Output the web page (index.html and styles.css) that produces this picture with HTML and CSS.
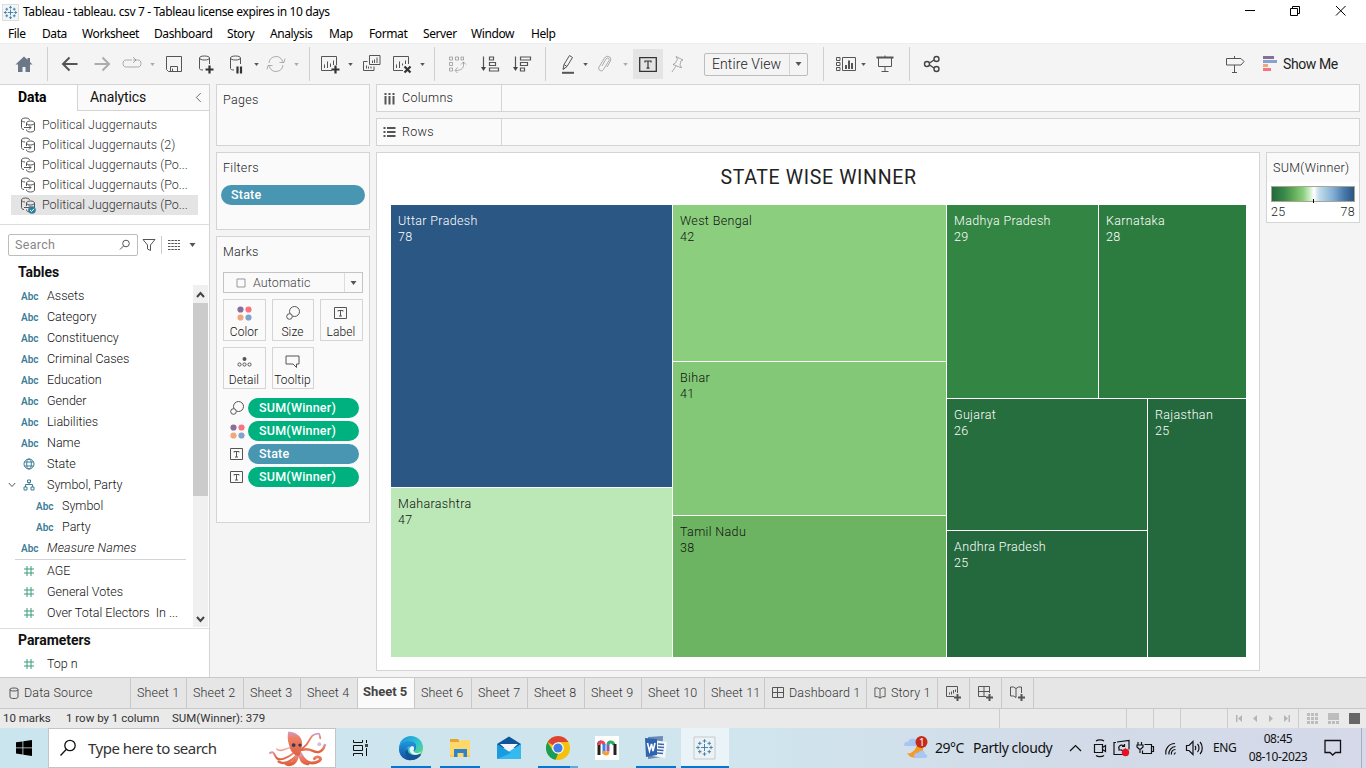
FILE: index.html
```html
<!DOCTYPE html>
<html lang="en">
<head>
<meta charset="utf-8">
<title>Tableau - tableau. csv 7</title>
<link rel="stylesheet" href="styles.css">
</head>
<body>
<svg class="defs" aria-hidden="true">
  <defs>
    <linearGradient id="edgeA" x1="0" y1="0" x2="1" y2="1"><stop offset="0" stop-color="#1a8fd6"/><stop offset=".5" stop-color="#2fc3d6"/><stop offset="1" stop-color="#6be05a"/></linearGradient>
    <linearGradient id="edgeB" x1="0" y1="0" x2="0" y2="1"><stop offset="0" stop-color="#2298e0"/><stop offset="1" stop-color="#0f4f9e"/></linearGradient>
    <linearGradient id="octo" x1="0" y1="0" x2="0" y2="1"><stop offset="0" stop-color="#c9a0cf"/><stop offset=".25" stop-color="#ee8068"/><stop offset="1" stop-color="#e0603f"/></linearGradient>
  </defs>
  <symbol id="logo" viewBox="0 0 16 16"><path d="M8 5v6M5 8h6M8 1v3M6.5 2.500h3M8 12v3M6.500 13.500h3M1 8h3M2.500 6.500v3M12 8h3M13.500 6.500v3M4 3v3M2.500 4.500h3M12 3v3M10.500 4.500h3M4 10v3M2.500 11.500h3M12 10v3M10.500 11.500h3"/></symbol>
  <symbol id="caret" viewBox="0 0 6 4"><path d="M0 0h6L3 4z"/></symbol>
  <symbol id="text" viewBox="0 0 18 15"><path d="M.7.7h16.600v13.600H.7z" stroke-width="1.300"/><path d="M6 5.500V4h6v1.500M9 4v7.200M7.500 11.200h3" stroke-width="1.200"/></symbol>
  <symbol id="stext" viewBox="0 0 14 12"><path d="M.5.5h12v11H.5z"/><path d="M4 4.500V3.500h5v1M6.500 3.500v5.500M5 9h3"/></symbol>
  <symbol id="size" viewBox="0 0 14 14"><circle cx="8.500" cy="5.500" r="5"/><circle cx="3.500" cy="10.500" r="2.800" class="knock"/></symbol>
  <symbol id="dots" viewBox="0 0 15 15"><circle cx="3.500" cy="3.500" r="3.100" fill="#886f97"/><circle cx="11.500" cy="3.500" r="3.100" fill="#f8727f"/><circle cx="3.500" cy="11.500" r="3.100" fill="#f1a77c"/><circle cx="11.500" cy="11.500" r="3.100" fill="#7fa3cc"/></symbol>
  <symbol id="ds" viewBox="0 0 16 16"><path d="M4 12.500C2.300 12.300 1.500 11.600 1.500 10.500V3C1.500 1.800 3.200 1 5.500 1S9.500 1.800 9.500 3M1.500 3C1.500 4.200 3 5 5 5M6.500 9V6C6.500 4.800 8.200 4 10.500 4s4 .8 4 2v7c0 1.200-1.700 2-4 2s-4-.8-4-2v-.5M6.500 6c0 1.200 1.700 2 4 2s4-.8 4-2M4 10.500h7M9 8.500l2 2-2 2"/></symbol>
  <symbol id="globe" viewBox="0 0 12 12"><circle cx="6" cy="6" r="5"/><ellipse cx="6" cy="6" rx="2.300" ry="5"/><path d="M1.500 4h9M1.500 8h9"/></symbol>
  <symbol id="hash" viewBox="0 0 12 12"><path d="M4 1v10M8 1v10M1 4h10M1 8h10"/></symbol>
  <symbol id="grid4" viewBox="0 0 12 12"><path d="M.5.5h11v10H.5zM5.500.5v10M.5 5.500h11"/></symbol>
  <symbol id="book" viewBox="0 0 12 13"><path d="M6 2.500L3.500 1H.5v9.500h3L6 12l2.500-1.500h3V1h-3L6 2.500zV12"/></symbol>
</svg>
<header class="titlebar">
  <svg class="ico app-logo"><use href="#logo"/></svg>
  <span class="title">Tableau - tableau. csv 7 - Tableau license expires in 10 days</span>
  <svg class="window-buttons" viewBox="0 0 110 20"><path d="M6 8.500h10M51.500 6.500h7v7h-7zM53.500 6V4.500h7v7H59M97 4l9.500 9.500M106.500 4L97 13.500"/></svg>
</header>
<nav class="menu"><span>File</span><span>Data</span><span>Worksheet</span><span>Dashboard</span><span>Story</span><span>Analysis</span><span>Map</span><span>Format</span><span>Server</span><span>Window</span><span>Help</span></nav>
<div class="toolbar">
  <i><svg class="i20 solid" viewBox="0 0 20 20"><path fill="#6b7887" d="M10 2.500L1.500 10.500H4V18h4.500v-5h3v5H16v-7.500h2.500L16 8V4h-2.500v1.800z"/></svg></i>
  <i class="sep first"></i>
  <i><svg class="i20 strong" viewBox="0 0 20 20"><path d="M17.500 10H3M9.500 3.500L3 10l6.500 6.500"/></svg></i>
  <i><svg class="i20 strong off" viewBox="0 0 20 20"><path d="M2.500 10H17M10.500 3.500L17 10l-6.500 6.500"/></svg></i>
  <i><svg class="i20 off" viewBox="0 0 20 20"><path d="M10 6H4C2 6 1 7.500 1 9.500S2 13 4 13h12c2 0 3-1.500 3-3.500S18 6 16 6h-5M11 3l3 3-3 3"/></svg></i>
  <i><svg class="caret off"><use href="#caret"/></svg></i>
  <i><svg class="i20" viewBox="0 0 20 20"><path d="M2.500 2.500h15v15h-13l-2-2zM6.500 17.500v-5h7v5M8.500 17v-2.500"/></svg></i>
  <i><svg class="i20" viewBox="0 0 20 20"><path d="M3.500 14.500V4C3.500 2.800 5.300 2 8.500 2s5 .8 5 2v6M3.500 4c0 1.200 2 2 5 2s5-.8 5-2M3.500 14.500c0 1 1.500 1.500 3.500 1.500"/><path class="heavy" d="M13.500 11.500v8M9.500 15.500h8"/></svg></i>
  <i><svg class="i20" viewBox="0 0 20 20"><path d="M4.500 14.500V4C4.500 2.800 6.300 2 9.500 2s5 .8 5 2v6M4.500 4c0 1.200 2 2 5 2s5-.8 5-2M4.500 14.500c0 1 1.500 1.500 3.500 1.500"/><path class="heavy" d="M11.500 12.500v7M15 12.500v7"/></svg></i>
  <i><svg class="caret"><use href="#caret"/></svg></i>
  <i><svg class="i20 off" viewBox="0 0 20 20"><path d="M3 9a7 7 0 0 1 13-3l1 2M17 11a7 7 0 0 1-13 3l-1-2M13.500 8.500h4.500l1-4M6.500 11.500H2l-1 4"/></svg></i>
  <i><svg class="caret off"><use href="#caret"/></svg></i>
  <i class="sep"></i>
  <i><svg class="i20" viewBox="0 0 20 20"><path d="M12 16.500H1.500v-14h15V11M4.500 14v-3.500M7.500 14V7.500M10.500 13V9.500M13.500 11V6.500"/><path class="heavy" d="M15.500 11.500v8M11.500 15.500h8"/></svg></i>
  <i><svg class="caret"><use href="#caret"/></svg></i>
  <i><svg class="i20" viewBox="0 0 20 20"><path d="M7.500 1.500h10.500v9H7.500zM5.500 7.500h-4v9h10.500v-4M10.500 9V6.500M12.500 9V5.500M15 9V3.500M4.500 14.500v-3M6.500 14.500v-2M9 14.500v-2"/></svg></i>
  <i><svg class="i20" viewBox="0 0 20 20"><path d="M11 16.500H1.500v-14h15V10M4.500 14v-3.500M7.500 14V7.500M10.500 11.500V9.500M13.500 10V6.500"/><path class="heavy" d="M12.500 12.500l6 6M18.500 12.500l-6 6"/></svg></i>
  <i><svg class="caret"><use href="#caret"/></svg></i>
  <i class="sep"></i>
  <i><svg class="i20 off" viewBox="0 0 20 20"><path d="M2.500 3h3v3h-3zM8.500 3h3v3h-3zM14 3h2.500v3H14zM2.500 8.500h3v3h-3zM2.500 14h3v3h-3zM16.500 8v3c0 3.500-2.500 5.500-8 5.500M14 10.500L16.500 8l2.500 2.500M10.500 13.500l-2.500 3 2.500 2.500"/></svg></i>
  <i><svg class="i20" viewBox="0 0 20 20"><path d="M3.500 2.500V15M9.500 3h4v3h-4zM9.500 8.500h6v3h-6zM9.500 14h9v3h-9z" stroke-width="1.200"/><path class="fill" d="M1 13h5l-2.500 4z"/></svg></i>
  <i><svg class="i20" viewBox="0 0 20 20"><path d="M3.500 2.500V15M8.500 3h10v3h-10zM8.500 8.500h7v3h-7zM8.500 14h4v3h-4z" stroke-width="1.200"/><path class="fill" d="M1 13h5l-2.500 4z"/></svg></i>
  <i class="sep"></i>
  <i><svg class="i20" viewBox="0 0 20 20"><path d="M5 15.500l1-5 5.500-9 3 2-5.500 9-4 3zM6 10.500l3 2M7 14l-1.500 1"/><path class="under" d="M4 18.800h12"/></svg></i>
  <i><svg class="caret"><use href="#caret"/></svg></i>
  <i><svg class="i20 off" viewBox="0 0 20 20"><path d="M7 12l4-7c1.500-2 4-.5 3 1.500l-5.500 9c-2 3-6 .5-4.500-2.500l5.500-9C11.500 1 17 2 15.500 7L12 13"/></svg></i>
  <i><svg class="caret off"><use href="#caret"/></svg></i>
  <i class="end"><b class="pressed"><svg class="textico"><use href="#text"/></svg></b></i>
  <i><svg class="i20 off" viewBox="0 0 20 20"><path d="M9 2.500l7 3.500-2 .8-1 4 1.500 3L6 10.500l2.500-1.500L10.500 5zM9 12l-4 6"/></svg></i>
  <i class="end"><span class="viewsel"><span>Entire View</span><b><svg class="caret big"><use href="#caret"/></svg></b></span></i>
  <i class="sep"></i>
  <i><svg class="fitico" viewBox="0 0 22 18"><path d="M7.500 2.500h13v13h-13zM1.500 2.500h3.500v3H1.500zM1.500 7.500h3.500v3H1.500zM1.500 12.500h3.500v3H1.500z"/><path d="M11 14v-4M14 14V5.500M17 14V8" stroke-width="2"/></svg></i>
  <i><svg class="caret"><use href="#caret"/></svg></i>
  <i><svg class="i20" viewBox="0 0 20 20"><path d="M3.500 4v8.500h13V4M10 12.500V17M6.500 17.500h7M10 1.500V3"/><path d="M1.500 3.500h17" stroke-width="2"/></svg></i>
  <i class="sep"></i>
  <i><svg class="i20 strong2" viewBox="0 0 20 20"><circle cx="5" cy="10" r="2.500"/><circle cx="14.500" cy="5" r="2.500"/><circle cx="14.500" cy="15" r="2.500"/><path d="M7.500 9L12 6M7.500 11l4.500 3"/></svg></i>
  <i></i>
  <i><svg class="i20" viewBox="0 0 20 20"><path d="M1.500 4.500h14.500l3 3-3 3.500H1.500zM9.500 2v2M9.500 11v7M7 18.500h5"/></svg></i>
  <span class="showme"><svg class="bars" viewBox="0 0 14 15"><path fill="#886f97" d="M0 0h11v3H0z"/><path fill="#84a3cf" d="M0 4h14v3H0z"/><path fill="#f1a77c" d="M0 8h5v3H0z"/><path fill="#f8727f" d="M0 12h8v3H0z"/></svg>Show Me</span>
</div>
<main class="work">
  <aside class="side">
    <div class="sidetabs"><b>Data</b><span>Analytics<svg viewBox="0 0 8 12"><path d="M6.500 1L1.500 6l5 5"/></svg></span></div>
    <ul class="sources">
      <li><svg class="ds"><use href="#ds"/></svg>Political Juggernauts</li>
      <li><svg class="ds"><use href="#ds"/></svg>Political Juggernauts (2)</li>
      <li><svg class="ds"><use href="#ds"/></svg>Political Juggernauts (Po...</li>
      <li><svg class="ds"><use href="#ds"/></svg>Political Juggernauts (Po...</li>
      <li class="on"><svg class="ds"><use href="#ds"/></svg><svg class="tick" viewBox="0 0 8 8"><circle cx="4" cy="4" r="3.800" fill="#2f7fa0" stroke="none"/><path d="M2 4l1.500 1.500L6 2.800" stroke="#fff"/></svg>Political Juggernauts (Po...</li>
    </ul>
    <div class="find">
      <span class="searchbox">Search<svg viewBox="0 0 12 12"><circle cx="7" cy="4.500" r="3.300"/><path d="M4.500 7L1 10.500"/></svg></span>
      <svg class="funnel" viewBox="0 0 14 14"><path d="M1 1.500h12L8.500 7v5.500l-3-1.500V7z"/></svg>
      <i></i>
      <svg class="listico" viewBox="0 0 14 12"><path d="M1 1.500h12M1 4.500h12M1 7.500h12M1 10.500h12" stroke-dasharray="2.500 .8"/></svg>
      <svg class="caret big"><use href="#caret"/></svg>
    </div>
    <h3 class="tables">Tables</h3>
    <div class="fieldarea">
      <ul class="fields">
        <li><em>Abc</em>Assets</li><li><em>Abc</em>Category</li><li><em>Abc</em>Constituency</li><li><em>Abc</em>Criminal Cases</li><li><em>Abc</em>Education</li><li><em>Abc</em>Gender</li><li><em>Abc</em>Liabilities</li><li><em>Abc</em>Name</li>
        <li><em><svg class="s12"><use href="#globe"/></svg></em>State</li>
        <li class="group"><svg class="chev" viewBox="0 0 8 6"><path d="M.8 1L4 4.500 7.200 1"/></svg><em><svg class="s12" viewBox="0 0 12 12"><path d="M4.500 1h3v2.500h-3zM6 3.500v2M2.500 8V5.500h7V8M1 8h3v3H1zM8 8h3v3H8z"/></svg></em>Symbol, Party</li>
        <li class="child"><em>Abc</em>Symbol</li><li class="child"><em>Abc</em>Party</li>
        <li class="names"><em>Abc</em><q>Measure Names</q></li>
        <li class="num"><em><svg class="s12"><use href="#hash"/></svg></em>AGE</li>
        <li class="num"><em><svg class="s12"><use href="#hash"/></svg></em>General Votes</li>
        <li class="num"><em><svg class="s12"><use href="#hash"/></svg></em>Over Total Electors&nbsp; In ...</li>
      </ul>
      <div class="scroll"><svg viewBox="0 0 15 17"><path d="M4 11l3.500-4 3.500 4"/></svg><b></b><svg viewBox="0 0 15 17"><path d="M4 7l3.500 4L11 7"/></svg></div>
    </div>
    <div class="params"><h3>Parameters</h3><ul class="fields"><li class="num"><em><svg class="s12"><use href="#hash"/></svg></em>Top n</li></ul></div>
  </aside>
  <section class="cards">
    <div class="card pages">Pages</div>
    <div class="card filters">Filters<span class="pill dim">State</span></div>
    <div class="card marks">
      <span>Marks</span>
      <div class="marktype"><svg viewBox="0 0 10 10"><path d="M1 1h8v8H1z"/></svg><span>Automatic</span><b><svg class="caret big"><use href="#caret"/></svg></b></div>
      <div class="markgrid">
        <span><svg class="m15"><use href="#dots"/></svg>Color</span>
        <span><svg class="m14"><use href="#size"/></svg>Size</span>
        <span><svg class="m13"><use href="#stext"/></svg>Label</span>
        <span><svg class="m15" viewBox="0 0 15 15"><circle cx="7.500" cy="5" r="2" fill="#555" stroke="none"/><circle cx="2.500" cy="10.500" r="1.600"/><circle cx="7.500" cy="10.500" r="1.600"/><circle cx="12.500" cy="10.500" r="1.600"/></svg>Detail</span>
        <span><svg class="m15" viewBox="0 0 15 15"><path d="M1 2h13v8h-2.500v3.500L8 10H1z"/></svg>Tooltip</span>
      </div>
      <div class="markrows">
        <div><svg class="m14"><use href="#size"/></svg><span class="pill mea">SUM(Winner)</span></div>
        <div><svg class="m15"><use href="#dots"/></svg><span class="pill mea">SUM(Winner)</span></div>
        <div><svg class="m13"><use href="#stext"/></svg><span class="pill dim">State</span></div>
        <div><svg class="m13"><use href="#stext"/></svg><span class="pill mea">SUM(Winner)</span></div>
      </div>
    </div>
  </section>
  <section class="canvas">
    <div class="shelf"><span><svg viewBox="0 0 13 13"><path d="M2.500 1v2M6.500 1v2M10.500 1v2M2.500 4v8.500M6.500 4v8.500M10.500 4v8.500"/></svg>Columns</span></div>
    <div class="shelf"><span><svg viewBox="0 0 13 13"><path d="M.5 2h2M.5 6h2M.5 10h2M4 2h8.500M4 6h8.500M4 10h8.500"/></svg>Rows</span></div>
    <div class="stage">
      <div class="view">
        <h1>STATE WISE WINNER</h1>
        <div class="treemap">
          <div class="col c1"><div class="t up">Uttar Pradesh<br>78</div><div class="t mh dark">Maharashtra<br>47</div></div>
          <div class="col c2"><div class="t wb dark">West Bengal<br>42</div><div class="t br dark">Bihar<br>41</div><div class="t tn dark">Tamil Nadu<br>38</div></div>
          <div class="col c3">
            <div class="r1"><div class="t mp">Madhya Pradesh<br>29</div><div class="t ka">Karnataka<br>28</div></div>
            <div class="r2"><div class="col"><div class="t gj">Gujarat<br>26</div><div class="t ap">Andhra Pradesh<br>25</div></div><div class="t rj">Rajasthan<br>25</div></div>
          </div>
        </div>
      </div>
      <div class="legend"><p>SUM(Winner)</p><div class="ramp"></div><div class="ends"><span>25</span><span>78</span></div></div>
    </div>
  </section>
</main>
<div class="tabs">
  <span class="src"><svg viewBox="0 0 10 13"><path d="M1 2.500C1 1.500 2.500 1 5 1s4 .5 4 1.500v7.500c0 1-1.500 1.500-4 1.500S1 11 1 10zC1 3.500 2.500 4 5 4s4-.5 4-1.500"/></svg>Data Source</span><span>Sheet 1</span><span>Sheet 2</span><span>Sheet 3</span><span>Sheet 4</span><span class="active">Sheet 5</span><span>Sheet 6</span><span>Sheet 7</span><span>Sheet 8</span><span>Sheet 9</span><span>Sheet 10</span><span>Sheet 11</span><span><svg class="s12"><use href="#grid4"/></svg>Dashboard 1</span><span><svg class="s12"><use href="#book"/></svg>Story 1</span>
  <span class="new"><svg viewBox="0 0 16 16"><path d="M8 10.500H.5v-10h11V7M3.500 8.500V6.500M5.500 8.500v-3M7.500 7.500V4M9.500 6V3.500"/><path class="plus" d="M11.500 8v7M8 11.500h7"/></svg></span>
  <span class="new"><svg viewBox="0 0 16 16"><path d="M8 10.500H.5v-10h11V7M.5 5.500h11M6 .5v10"/><path class="plus" d="M11.500 8v7M8 11.500h7"/></svg></span>
  <span class="new"><svg viewBox="0 0 16 16"><path d="M6 11.500L3.500 10H.5V1h3L6 2.500 8.500 1h3v6M6 2.500v9"/><path class="plus" d="M11.500 8v7M8 11.500h7"/></svg></span>
</div>
<div class="status">
  <span>10 marks</span><span>1 row by 1 column</span><span>SUM(Winner): 379</span>
  <i></i><i></i><i></i><i></i>
  <i class="nav"><svg viewBox="0 0 56 10"><path d="M1 2h1.500v7H1zM7 2v7L3 5.500zM22 2v7l-4-3.500zM34 2v7l4-3.500zM49 2v7l4-3.500zM53.500 2H55v7h-1.500z"/></svg></i>
  <i class="views"><svg viewBox="0 0 54 12"><path fill="#bdbdbd" d="M0 1h3v3H0zM4 1h3v3H4zM8 1h3v3H8zM0 5h3v3H0zM4 5h3v3H4zM8 5h3v3H8zM0 9h3v3H0zM4 9h3v3H4zM8 9h3v3H8zM21 1h11v7H21zM21 9h3v3h-3zM25 9h3v3h-3zM29 9h3v3h-3z"/><path fill="#666" d="M42 1h11v11H42z"/></svg></i>
</div>
<footer class="taskbar">
  <div class="cell"><svg class="win" viewBox="0 0 16 16"><path d="M0 2.300L6.500 1.400V7.500H0zM7.300 1.300L16 0v7.500H7.300zM0 8.300h6.500v6.200L0 13.600zM7.300 8.300H16V16l-8.700-1.300z"/></svg></div>
  <div class="wsearch"><svg class="mag" viewBox="0 0 18 18"><circle cx="11" cy="6.500" r="5.200"/><path d="M7.200 10.500L1.500 16.500"/></svg><span>Type here to search</span>
    <svg class="octopus" viewBox="0 0 60 36"><g fill="none" stroke="url(#octo)" stroke-linecap="round"><path d="M27 22C20 28 10 33 7 27S4 22 1 23" stroke-width="2"/><path d="M30 24C22 34 14 35 10 32" stroke-width="2.500"/><path d="M25 17C16 18 12 23 8 19" stroke-width="1.500" opacity=".6"/><path d="M33 24C37 34 45 35 51 32S50 25 47 29" stroke-width="3"/><path d="M34 20C44 17 46 24 52 22S57 14 58 15" stroke-width="2.500"/><path d="M34 19C44 12 41 6 47 4S52 3 53 8" stroke-width="1.800"/><path d="M29 25C28 34 22 36 18 34M32 25c2 5 2 8 8 9" stroke-width="4"/></g><path fill="url(#octo)" d="M20 1C30 2 36 8 34 17c-1 4-1 8-3 9s-8-3-9-7S18 9 20 1z"/><circle cx="25.500" cy="15" r="2" fill="#333b55"/><circle cx="32" cy="15" r="1.700" fill="#333b55"/><circle cx="52" cy="14" r="2" fill="#d8bdd9"/></svg>
  </div>
  <div class="apps">
    <div><svg class="taskview" viewBox="0 0 18 16"><path d="M1.500 0v2.500h9V0M1.500 5.500h9v5h-9zM1.500 16v-2.500h9V16M14.500 0v3M14.500 8v8"/><path class="fill" d="M13 4h3v3h-3z"/></svg></div>
    <div class="run"><svg viewBox="0 0 24 24"><circle cx="12" cy="12" r="12" fill="url(#edgeA)"/><path fill="url(#edgeB)" d="M0 13C1 7 5 5 10 5c5 0 8 3 7 6 0 3-2 4-2 4s-2-6-6-4-2 9 3 10c4 1 8-2 10-3-3 5-8 7-13 6C3 23 0 18 0 13z"/><path fill="#155296" d="M9 12c-2 5 4 9 12 6l1 1c-3 4-8 6-12 4-4-3-5-8-1-11z"/><path fill="#e8f4f8" d="M14 10c3 3-1 4 1 6s6 1 8-1c-2 4-8 5-11 2-3-4-1-7 2-7z"/></svg></div>
    <div class="run"><svg viewBox="0 0 24 24"><path fill="#e7a52b" d="M2 3h8l2 3h-10z"/><path fill="#ffd869" d="M2 6h9l2-2h9v17H2z"/><path fill="#2d84c8" d="M6 13h13v8h-3.500v-4h-6v4H6z"/><path fill="#ffc94a" d="M2 19h4v2H2zM19 19h3v2h-3z"/></svg></div>
    <div><svg viewBox="0 0 24 24"><path fill="#0d5699" d="M0 8L12 .5 24 8v4H0z"/><path fill="#f3f7fb" d="M3 8h18l-9 8z"/><path fill="#36b9ef" d="M24 8v15H0z"/><path fill="#1a9be0" d="M0 8l14 9-14 6z"/></svg></div>
    <div class="run partial"><svg viewBox="0 0 24 24"><circle cx="12" cy="12" r="12" fill="#f4c20d"/><path fill="#db4437" d="M12 12L1.600 6A12 12 0 0 1 22.400 6H12z"/><path fill="#199d58" d="M1.600 6L7 15l5 3-2.500 5.800A12 12 0 0 1 1.600 6z"/><circle cx="12" cy="12" r="5.800" fill="#fff"/><circle cx="12" cy="12" r="4.600" fill="#3f7eea"/></svg></div>
    <div><svg viewBox="0 0 24 24"><path fill="#fff" d="M0 0h24v24H0z"/><g fill="none" stroke-width="3"><path stroke="#222" d="M4 19V9a2 2 0 0 1 2-3"/><path stroke="#e94560" d="M4 9c0-4 5-4 5 0"/><path stroke="#3c82ed" d="M9 8v10"/><path stroke="#f3a12e" d="M9 15c0 4 4 4 4 0"/><path stroke="#9a52c5" d="M13 15V9"/><path stroke="#2cae63" d="M13 9c0-4 5-4 6 0"/><path stroke="#222" d="M20 8v11"/></g></svg></div>
    <div class="run"><svg viewBox="0 0 24 24"><path fill="#6c8ab5" d="M4 1l15-1-1 21-14 2z"/><path fill="#f4f7fb" d="M9 4l14 2-2 16-13-2z"/><path fill="#2f65b0" d="M1 2l12 1v16L2 21z"/><path d="M3.500 7l2 8 2-7 1.500 7 2-8" fill="none" stroke="#fff" stroke-width="1.600"/><path d="M14 8l6 .5M14 11l6 .5M13 14l6.500.5M13 17l6 .5" stroke="#3b69a8" stroke-width="1.500"/></svg></div>
    <div class="run current"><svg class="tile" viewBox="0 0 24 24"><path fill="#edf2f5" stroke="#c5cbd0" stroke-width="1" d="M1 1h21v22H1z"/><svg class="logo-in" x="2" y="2" width="19" height="19"><use href="#logo"/></svg></svg></div>
  </div>
  <div class="tray">
    <svg class="weather" viewBox="0 0 26 24"><path fill="#f59a23" d="M14 5a8.500 8.500 0 1 1-10 12C8 19 15 13 14 5z"/><path fill="#a9c5f2" d="M1 9c0-3 3-4 4-3 1-4 8-5 9 0 3 0 3 4 0 4H4C2 10 1 10 1 9zM11 20c0-3 3-4 4-3 1-3 7-4 7 1 3 0 3 4 0 4h-9c-1 0-2-1-2-2z"/><circle cx="18.500" cy="6" r="6" fill="#c42b1c"/><text x="16" y="9.500">1</text></svg>
    <span class="temp">29°C</span><span class="cond">Partly cloudy</span>
    <svg class="trayicons" viewBox="0 0 142 20"><path d="M2 13l5.500-5.500L13 13M28 3c2-1.500 6-1.500 8 0M28 17.500c2 1.500 6 1.500 8 0M26.500 6.500h8v8h-8zM34.500 9.500l3-2v6l-3-2M48 4.500h-2v12h9M49 4l12-1.500v9M50.500 10c.5-3 4-4 6-1.500M56.500 6v2.500H54M51 9.500V12h2.500c2 2 4 .5 4-1.500M76.500 6.500h7v9h-9v-3M83.500 8.500h2v5h-2M70 7v-3M73.500 7v-3M69 7h6v2l-2 2h-2l-2-2zM72 11v4M98 16.500a9 9 0 0 1 9-11M101 16.500a7 7 0 0 1 6.500-8M103.500 16.500a4 4 0 0 1 4-5M106 16.500l1.500-2M118.500 7.500H121l4-4v13l-4-4h-2.500zM127 8c1 1 1 3 0 4M129.500 6c2 2 2 6 0 8M132 4c3 3 3 9 0 12"/><circle cx="57.500" cy="14.500" r="3.700"/></svg>
    <span class="lang">ENG</span><span class="clock">08:45<br>08-10-2023</span>
    <svg class="bell" viewBox="0 0 18 18"><path d="M1 1.500h15.500v12h-5L8.700 16 6 13.500H1z"/></svg>
    <i class="desk"></i>
  </div>
</footer>
</body>
</html>
```

FILE: styles.css
```css
* { box-sizing: border-box; }
body { margin: 0; width: 1366px; height: 768px; overflow: hidden; background: #f4f4f4; font: 300 12.5px/20px Roboto, "Noto Sans", sans-serif; letter-spacing: .3px; color: #222; display: flex; flex-direction: column; }
ul, h1, h3, p { margin: 0; padding: 0; list-style: none; font-weight: 300; }
i, em { font-style: normal; }
svg { display: block; flex: none; overflow: visible; fill: none; stroke: #555; stroke-width: 1; }
.defs { position: absolute; width: 0; height: 0; }
.fill { fill: #444; stroke: none; }
#logo { stroke: #3f7fa5; }
#dots, #caret { stroke: none; }
.knock { fill: #fafafa; }

/* window chrome */
.titlebar { height: 24px; background: #fff; display: flex; align-items: center; flex: none; font: 12px/20px "Noto Sans", sans-serif; letter-spacing: -.37px; color: #000; }
.app-logo { width: 15px; height: 15px; margin: 0 5px 0 3px; background: #f3f5f7; stroke: #3f7fa5; box-shadow: 0 0 0 1px #ddd; }
.title { flex: 1; }
.window-buttons { width: 110px; height: 20px; margin-right: 17px; stroke: #000; }
.menu { height: 19px; flex: none; background: #fff; padding-left: 8px; display: grid; grid-template-columns: 34px 40px 72px 73px 43px 59px 40px 54px 48px 60px 60px; font: 12px/20px "Noto Sans", sans-serif; letter-spacing: -.4px; color: #000; white-space: nowrap; }

.toolbar { height: 41px; flex: none; border-top: 1px solid #eee; display: grid; grid-template-columns: 47px 7px 32px 32px 28px 12px 32px 32px 28px 12px 28px 12px 14px 28px 12px 32px 28px 12px 13px 32px 33px 32px 15px 30px 4px 36px 4px 36px 28px 117px 31px 14px 20px 24px 25px 20px 1fr 28px 117px; }
.toolbar i { display: flex; align-items: center; justify-content: center; min-width: 0; }
.toolbar i.end { justify-content: flex-end; }
.toolbar .sep::before { content: ""; width: 1px; height: 34px; background: #d0d0d0; flex: none; }
.toolbar .first { justify-content: flex-start; }
.i20 { width: 20px; height: 20px; }
.solid { stroke: none; }
.strong { stroke-width: 2; }
.strong2 { stroke-width: 1.4; stroke: #444; }
.off { opacity: .45; }
.heavy { stroke: #333; stroke-width: 2.2; }
.under { stroke-width: 2; }
.caret { width: 5px; height: 3px; fill: #555; stroke: none; }
.caret.big { width: 7px; height: 4px; }
.pressed { width: 30px; height: 30px; background: #e4e4e4; display: grid; place-items: center; }
.textico { width: 18px; height: 15px; stroke: #333; }
.viewsel { width: 104px; height: 23px; border: 1px solid #bdbdbd; border-radius: 2px; display: flex; font-size: 14px; line-height: 20px; letter-spacing: .1px; color: #222; }
.viewsel span { flex: 1; padding-left: 7px; }
.viewsel b { width: 18px; border-left: 1px solid #d4d4d4; display: grid; place-items: center; }
.fitico { width: 22px; height: 18px; }
.showme { display: flex; align-items: center; font-size: 14px; font-weight: 400; letter-spacing: -.4px; color: #222; padding: 0 0 1px 14px; }
.bars { width: 14px; height: 15px; margin-right: 6px; stroke: none; }

.work { height: 593px; flex: none; display: flex; }

/* data pane */
.side { width: 210px; border-top: 1px solid #d4d4d4; border-right: 1px solid #d4d4d4; background: #fff; display: flex; flex-direction: column; }
.sidetabs { display: flex; height: 26px; line-height: 25px; font-size: 14px; flex: none; color: #111; }
.sidetabs b { width: 77px; padding-left: 18px; font-weight: 700; color: #000; letter-spacing: -.1px; }
.sidetabs span { flex: 1; padding: 0 7px 0 12px; background: #fafafa; border-left: 1px solid #d4d4d4; border-bottom: 1px solid #d4d4d4; display: flex; align-items: center; justify-content: space-between; letter-spacing: -.1px; font-weight: 400; }
.sidetabs svg { width: 7px; height: 11px; }
.sources { padding: 4px 11px 9px; border-bottom: 1px solid #ddd; flex: none; height: 114px; color: #333; }
.sources li { height: 20px; padding-left: 9px; display: flex; align-items: center; white-space: nowrap; letter-spacing: 0; position: relative; }
.sources .on { background: #e4e4e4; }
.ds { width: 16px; height: 16px; margin-right: 6px; }
.tick { position: absolute; left: 17px; top: 11px; width: 8px; height: 8px; stroke-width: 1; }
.find { display: flex; align-items: center; height: 22px; margin: 9px 0 0 8px; flex: none; }
.find i { width: 1px; height: 18px; background: #ccc; }
.searchbox { width: 130px; height: 22px; border: 1px solid #bdbdbd; border-radius: 2px; padding: 0 6px; display: flex; align-items: center; justify-content: space-between; color: #888; font-weight: 400; }
.searchbox svg { width: 12px; height: 12px; }
.funnel { width: 14px; height: 14px; margin: 0 5px 0 4px; }
.listico { width: 14px; height: 12px; margin: 0 8px 0 5px; }
.tables, .params h3 { font-size: 14px; font-weight: 700; color: #111; letter-spacing: -.05px; padding-left: 18px; }
.tables { height: 29px; line-height: 33px; flex: none; }
.fieldarea { display: flex; height: 343px; flex: none; }
.fields { flex: 1; min-width: 0; white-space: nowrap; color: #111; letter-spacing: 0; }
.fields li { height: 21px; line-height: 21px; display: flex; align-items: center; padding-left: 21px; }
.fields em { width: 26px; color: #3c7d98; font-size: 10px; font-weight: 600; letter-spacing: 0; padding-top: 2px; }
.fields .s12 { margin-left: 2px; margin-top: -2px; stroke: #3c7d98; }
.fields .num .s12 { stroke: #3a9a78; }
.s12 { width: 12px; height: 12px; }
.group { position: relative; }
.chev { position: absolute; left: 8px; top: 8px; width: 8px; height: 6px; }
.fields .child { padding-left: 36px; }
.fields q { quotes: none; font-style: italic; letter-spacing: .15px; }
.fields .names { position: relative; margin-bottom: 2px; }
.names::after { content: ""; position: absolute; left: 15px; right: 7px; bottom: -2px; border-bottom: 1px solid #d4d4d4; }
.scroll { width: 16px; padding: 1px 1px 0 0; height: 342px; display: flex; flex-direction: column; justify-content: space-between; }
.scroll { background: linear-gradient(90deg, #f0f0f0 15px, #fff 15px); }
.scroll b { height: 193px; background: #cbcbcb; margin-bottom: auto; }
.scroll svg { width: 15px; height: 17px; stroke: #444; stroke-width: 2; }
.params { border-top: 1px solid #ddd; padding-top: 1px; }
.params h3 { height: 23px; line-height: 20px; }

/* shelves and cards */
.cards { width: 154px; margin-left: 6px; display: flex; flex-direction: column; gap: 6px; }
.card { border: 1px solid #d4d4d4; background: #fafafa; padding: 5px 6px; display: flex; flex-direction: column; }
.pages { height: 62px; }
.filters { height: 78px; padding-left: 4px; padding-right: 4px; text-indent: 2px; }
.marks { height: 287px; }
.pill { height: 20px; border-radius: 10px; color: #fff; font-weight: 500; letter-spacing: .2px; padding-left: 10px; line-height: 20px; display: block; text-indent: 0; }
.markrows .pill { padding-left: 11px; }
.filters .pill { margin-top: 7px; }
.dim { background: #4996b2; }
.mea { background: #00b180; }
.marktype { margin-top: 10px; height: 21px; border: 1px solid #c4c4c4; display: flex; align-items: center; line-height: 19px; color: #444; letter-spacing: .1px; flex: none; }
.marktype svg:not(.caret) { width: 10px; height: 10px; margin: 0 7px 0 12px; stroke: #999; }
.marktype span { flex: 1; }
.marktype b { width: 18px; height: 100%; border-left: 1px solid #ddd; display: grid; place-items: center; }
.markgrid { display: grid; grid-template-columns: 43px 42px 43px; gap: 6px; column-gap: 6px; margin-top: 6px; }
.markgrid span { height: 42px; border: 1px solid #d4d4d4; display: flex; flex-direction: column; align-items: center; justify-content: space-between; font-size: 12px; line-height: 15px; padding-top: 6px; padding-right: 1px; letter-spacing: .1px; color: #111; }
.m15 { width: 15px; height: 15px; }
.m14 { width: 14px; height: 14px; }
.m13 { width: 14px; height: 12px; }
.markgrid .m13 { margin-top: 1px; }
.markrows { display: grid; gap: 3px; margin: 9px -3px 0 7px; }
.markrows div { display: grid; grid-template-columns: 18px 111px; align-items: center; }

.canvas { width: 984px; margin-left: 6px; display: flex; flex-direction: column; gap: 6px; }
.shelf { height: 28px; border: 1px solid #d4d4d4; background: #fafafa; flex: none; }
.shelf span { width: 125px; height: 26px; border-right: 1px solid #d4d4d4; padding-left: 6px; display: flex; align-items: center; }
.shelf svg { width: 13px; height: 13px; margin-right: 6px; stroke-width: 2; }
.stage { display: flex; justify-content: space-between; align-items: flex-start; }
.view { width: 884px; height: 519px; background: #fff; border: 1px solid #d4d4d4; padding: 0 13px 0 14px; }
.view h1 { height: 52px; line-height: 50px; text-align: center; font-size: 19.5px; letter-spacing: .65px; font-weight: 400; }
.treemap { height: 452px; width: 855px; display: flex; gap: 1px; line-height: 16px; letter-spacing: .35px; color: #fff; }
.treemap div { min-width: 0; }
.col, .c3 { display: flex; flex-direction: column; gap: 1px; }
.c1 { width: 281px; } .c2 { width: 273px; } .c3 { width: 299px; }
.t { padding: 8px 7px; white-space: nowrap; overflow: hidden; }
.treemap .dark { color: #111; }
.r1, .r2 { display: flex; gap: 1px; }
.r1 { height: 193px; } .r2 { height: 258px; }
.r2 .col { width: 200px; }
.up { height: 282px; background: #2a5783; }
.mh { height: 169px; background: #bce8b7; }
.wb { height: 156px; background: #8bcf7e; }
.br { height: 153px; background: #83c877; }
.tn { height: 141px; background: #6db462; }
.mp { width: 151px; background: #338543; }
.ka { width: 147px; background: #2d7c3f; }
.gj { height: 131px; background: #266e3d; }
.ap { height: 126px; background: #24693d; }
.rj { width: 98px; background: #24693d; }
.legend { width: 94px; height: 71px; background: #fff; border: 1px solid #d4d4d4; }
.legend p { height: 29px; line-height: 30px; background: #fafafa; padding-left: 6px; }
.ramp { margin: 4px 4px 0; height: 16px; border: 1px solid #aaa493; position: relative; background: linear-gradient(90deg, #24693d, #39894a 15%, #69b05d 28%, #8bcf7e 38%, #d4f0cf 47%, #fff 51%, #c5deec 57%, #7fadd2 75%, #4978ab 88%, #2a5783); }
.ramp::after { content: ""; position: absolute; left: 41px; bottom: -2px; width: 1px; height: 4px; background: #000; }
.ends { display: flex; justify-content: space-between; padding: 0 4px; }

/* sheet tabs and status */
.tabs { height: 32px; flex: none; border-top: 1px solid #c8c8c8; border-bottom: 1px solid #c8c8c8; background: #e6e6e6; display: grid; grid-template-columns: 131px 56px 57px 57px 57px 57px 57px 56px 57px 57px 63px 60px 102px 71px 32px 32px 32px; line-height: 30px; color: #333; letter-spacing: .15px; white-space: nowrap; }
.tabs span { border-right: 1px solid #c8c8c8; padding-left: 6px; display: flex; align-items: center; }
.tabs .src { padding-left: 9px; }
.tabs .src svg { width: 10px; height: 13px; margin-right: 5px; }
.tabs .active { background: #fafafa; font-weight: 700; font-size: 13px; color: #444; padding-left: 5px; line-height: 28px; align-items: flex-start; letter-spacing: -.05px; }
.tabs .s12 { margin: 0 5px 0 1px; }
.tabs .new { padding-left: 8px; }
.new svg { width: 16px; height: 16px; margin-top: 2px; }
.plus { stroke-width: 2; }
.status { height: 19px; flex: none; background: #eaeaea; display: grid; grid-template-columns: 63px 106px 827px 127px 27px 27px 47px 71px 1fr; padding-left: 3px; font-size: 11.500px; font-weight: 400; line-height: 18px; letter-spacing: 0; color: #333; }
.status i { border-left: 1px solid #ccc; }
.nav svg { width: 56px; height: 10px; margin: 4px 0 0 7px; fill: #b5b5b5; stroke: none; }
.views svg { width: 54px; height: 12px; margin: 3px 0 0 8px; stroke: none; }

/* taskbar */
.taskbar { height: 40px; flex: none; display: flex; color: #111; background: linear-gradient(90deg, #cbe5ee, #d0e5ee 55%, #d2dbe7 78%, #d5d9ea); font-family: "Noto Sans", sans-serif; font-weight: 400; letter-spacing: 0; }
.cell { width: 48px; display: grid; place-items: center; }
.win { width: 16px; height: 16px; fill: #000; stroke: none; }
.wsearch { width: 288px; background: #fff; border: 1px solid #c4c4c4; display: flex; align-items: center; font-size: 15px; letter-spacing: -.5px; color: #333; }
.wsearch span { flex: 1; }
.mag { width: 18px; height: 18px; margin: 0 11px 0 10px; stroke: #111; stroke-width: 1.300; }
.octopus { width: 58px; height: 36px; margin-right: 8px; stroke: none; }
.apps { display: flex; }
.apps div { width: 49px; display: flex; align-items: center; justify-content: center; border-bottom: 2px solid transparent; position: relative; }
.apps div:nth-child(1) { width: 50px; }
.apps svg { width: 24px; height: 24px; stroke: none; margin-top: 2px; }
.apps .taskview { width: 18px; height: 16px; stroke: #111; }
.run::after { content: ""; position: absolute; bottom: -2px; left: 5px; width: 40px; height: 2px; background: #0078d7; }
.partial::after { background: linear-gradient(90deg, #0078d7 32px, #62a9df 32px); }
.apps .current { background: #eaf3f7; width: 48px; margin-left: 1px; }
.current::after { left: 0; width: 48px; }
.apps .logo-in { width: 19px; height: 19px; stroke-width: .8; }
.tray { margin-left: auto; display: flex; align-items: center; white-space: nowrap; }
.weather { width: 26px; height: 24px; stroke: none; }
.weather text { fill: #fff; font: 10px "Noto Sans", sans-serif; }
.temp { width: 38px; margin-left: 6px; font-size: 14px; letter-spacing: -.5px; }
.cond { width: 95px; font-size: 14px; letter-spacing: -.42px; }
.trayicons { width: 142px; height: 20px; stroke: #111; stroke-width: 1.200; }
.trayicons circle { fill: #e81123; stroke: none; }
.lang { width: 35px; margin-left: 3px; font-size: 12px; letter-spacing: -.4px; }
.clock { width: 60px; text-align: center; font-size: 12px; line-height: 18px; letter-spacing: -.4px; }
.bell { width: 18px; height: 18px; stroke: #111; stroke-width: 1.300; margin: 0 19px 0 16px; }
.desk { width: 1px; height: 40px; background: #a9afba; margin-right: 4px; }
```
